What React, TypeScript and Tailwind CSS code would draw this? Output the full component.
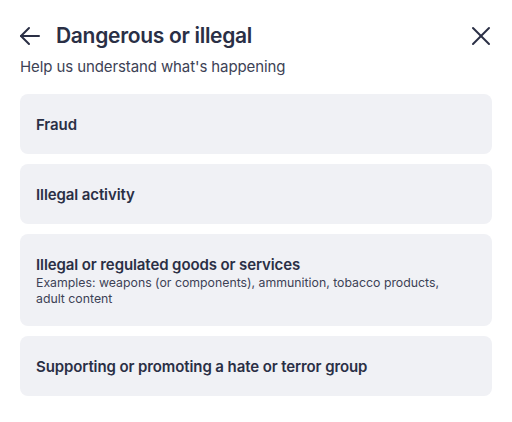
import React from "react";

const items: { title: string; sub?: string }[] = [
  { title: "Fraud" },
  { title: "Illegal activity" },
  {
    title: "Illegal or regulated goods or services",
    sub: "Examples: weapons (or components), ammunition, tobacco products, adult content",
  },
  { title: "Supporting or promoting a hate or terror group" },
];

export default function App() {
  return (
    <div
      className="w-[512px] h-[422px] bg-white px-5 pt-[22px]"
      style={{ fontFamily: "Inter, 'Noto Sans', sans-serif" }}
    >
      <div className="flex items-center justify-between h-[28px]">
        <div className="flex items-center gap-[14px]">
          <svg width="24" height="24" viewBox="0 0 24 24" fill="none" stroke="#2a2f45" strokeWidth="2" strokeLinecap="round" strokeLinejoin="round" className="-ml-[2px]">
            <path d="M21 12H3" />
            <path d="M11 4l-8 8 8 8" />
          </svg>
          <h1 className="text-[21px] font-semibold text-[#2a2f45] tracking-[-0.3px]">Dangerous or illegal</h1>
        </div>
        <svg width="24" height="24" viewBox="0 0 24 24" fill="none" stroke="#2a2f45" strokeWidth="2" strokeLinecap="round" className="-mr-[1px]">
          <path d="M4 4l16 16" />
          <path d="M20 4L4 20" />
        </svg>
      </div>
      <p className="mt-[7px] text-[15px] leading-[20px] text-[#3d4255] tracking-[-0.1px]">Help us understand what's happening</p>
      <div className="mt-[17px] flex flex-col gap-[10px]">
        {items.map((it) => (
          <div
            key={it.title}
            className={`bg-[#f0f1f5] rounded-[8px] px-4 pt-[2px] flex flex-col justify-center ${it.sub ? "h-[92px]" : "h-[60px]"}`}
          >
            <div className="text-[15px] font-semibold text-[#2a2f45] leading-[20px] tracking-[-0.1px]">{it.title}</div>
            {it.sub && (
              <div className="text-[12.3px] text-[#3d4255] leading-[16px] pr-[36px]">{it.sub}</div>
            )}
          </div>
        ))}
      </div>
    </div>
  );
}
